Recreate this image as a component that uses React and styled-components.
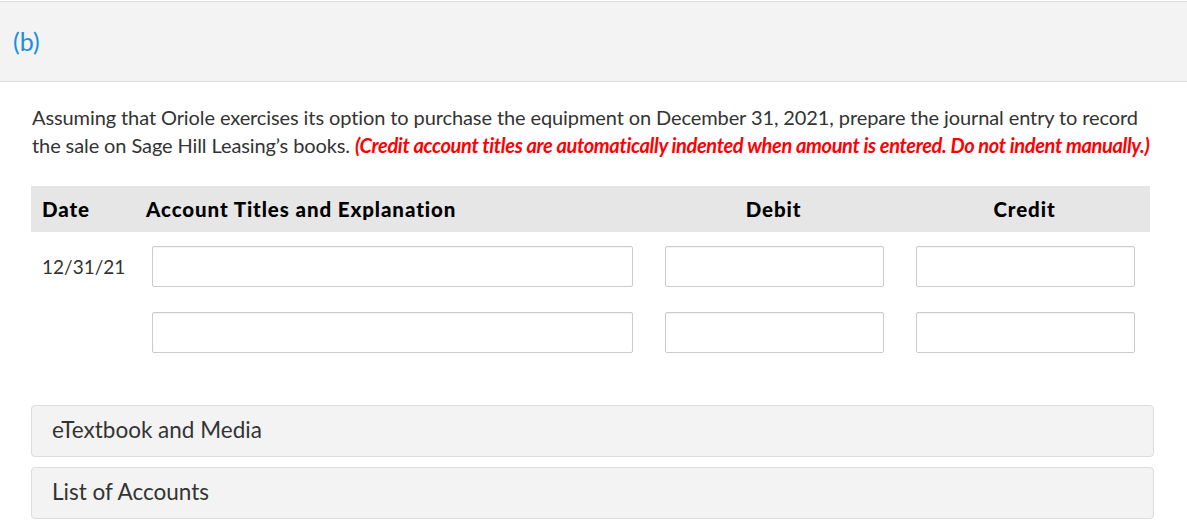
import styled, { createGlobalStyle } from 'styled-components'

const GlobalStyle = createGlobalStyle`
  body {
    margin: 0;
    background: #fff;
    font-family: Lato, "Open Sans", sans-serif;
    color: #333;
  }
`

const Page = styled.div`
  width: 1187px;
  padding-top: 1px;
`

const PartHeader = styled.div`
  box-sizing: border-box;
  height: 81px;
  background: #f3f3f3;
  border-top: 1px solid #dcdcdc;
  border-bottom: 1px solid #dcdcdc;
  display: flex;
  align-items: center;
  padding: 0 0 2px 13px;
`

const PartLabel = styled.span`
  color: #1a8fe3;
  font-size: 25px;
`

const Body = styled.div`
  padding: 21px 0 0 31px;
`

const Prompt = styled.p`
  margin: 0 0 0 1px;
  font-size: 20px;
  line-height: 28px;
  color: #333;
  width: 1130px;
  letter-spacing: -0.1px;
`

const Note = styled.em`
  color: #f00;
  font-weight: 700;
  letter-spacing: -0.35px;
`

const Journal = styled.div`
  margin-top: 27px;
  width: 1119px;
`

const HeadRow = styled.div`
  display: grid;
  grid-template-columns: 109px 508px 251px 251px;
  height: 46px;
  align-items: center;
  background: #e6e6e6;
  color: #000;
  font-weight: 900;
  font-size: 20.5px;
  letter-spacing: 0.9px;
`

const HeadCell = styled.div`
  padding-left: ${p => p.$pad || 0}px;
  text-align: ${p => (p.$center ? 'center' : 'left')};
`

const EntryRow = styled.div`
  display: grid;
  grid-template-columns: 109px 508px 251px 251px;
  align-items: center;
  margin-top: ${p => p.$gap}px;
`

const DateCell = styled.div`
  padding-left: 11px;
  font-size: 19px;
  color: #333;
`

const Field = styled.input`
  box-sizing: border-box;
  height: 41px;
  margin-left: ${p => p.$left}px;
  width: ${p => p.$width}px;
  border: 1px solid #cbcbcb;
  border-radius: 2px;
  background: #fff;
  box-shadow: inset 0 1px 1px rgba(0, 0, 0, 0.05);
  outline: none;
`

const Panels = styled.div`
  margin-top: 52px;
  display: flex;
  flex-direction: column;
  gap: 10px;
  width: 1123px;
`

const Panel = styled.div`
  box-sizing: border-box;
  height: 52px;
  background: #f3f3f3;
  border: 1px solid #dcdcdc;
  border-radius: 4px;
  display: flex;
  align-items: center;
  padding: 0 0 3px 20px;
  font-size: 22.5px;
  color: #333;
`

const App = () => {
  const rows = [
    { date: '12/31/21', gap: 14 },
    { date: '', gap: 25 },
  ]

  return (
    <Page>
      <GlobalStyle />
      <PartHeader>
        <PartLabel>(b)</PartLabel>
      </PartHeader>
      <Body>
        <Prompt>
          Assuming that Oriole exercises its option to purchase the equipment on December 31, 2021, prepare the journal entry to record
          the sale on Sage Hill Leasing’s books.{' '}
          <Note>(Credit account titles are automatically indented when amount is entered. Do not indent manually.)</Note>
        </Prompt>
        <Journal>
          <HeadRow>
            <HeadCell $pad={11}>Date</HeadCell>
            <HeadCell $pad={6}>Account Titles and Explanation</HeadCell>
            <HeadCell $center>Debit</HeadCell>
            <HeadCell $center>Credit</HeadCell>
          </HeadRow>
          {rows.map((r, i) => (
            <EntryRow key={i} $gap={r.gap}>
              <DateCell>{r.date}</DateCell>
              <Field $left={12} $width={481} />
              <Field $left={17} $width={219} />
              <Field $left={17} $width={219} />
            </EntryRow>
          ))}
        </Journal>
        <Panels>
          <Panel>eTextbook and Media</Panel>
          <Panel>List of Accounts</Panel>
        </Panels>
      </Body>
    </Page>
  )
}

export default App
